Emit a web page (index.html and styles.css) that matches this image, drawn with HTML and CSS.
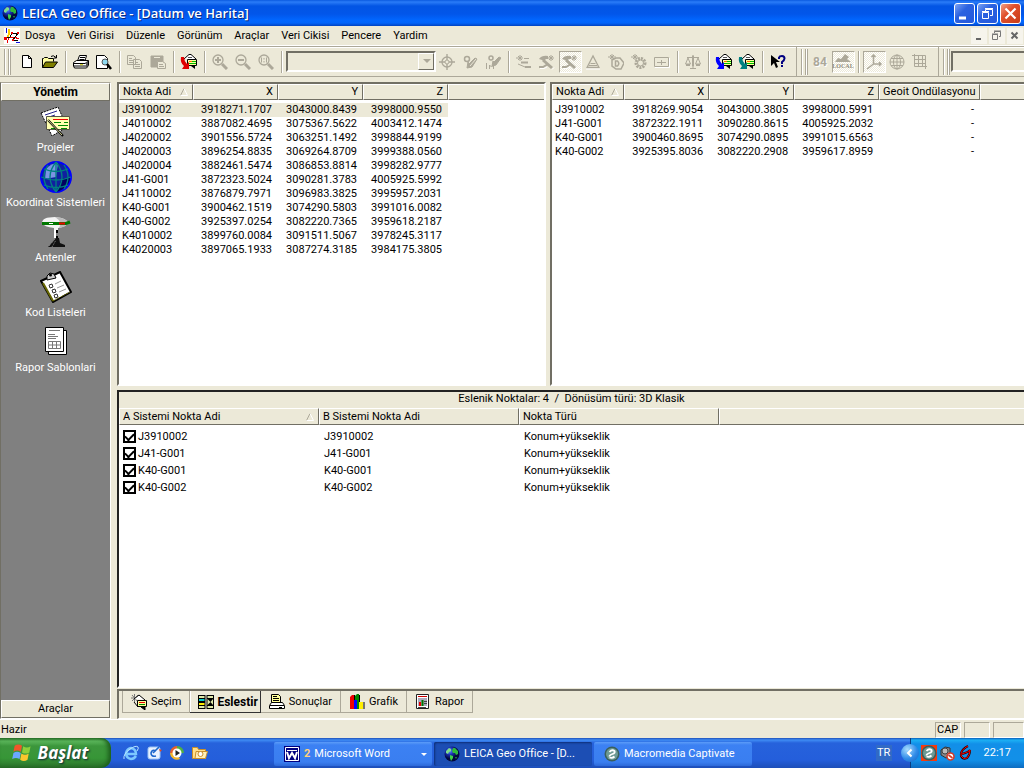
FILE: index.html
```html
<!DOCTYPE html>
<html lang="tr">
<head>
<meta charset="utf-8">
<title>LEICA Geo Office - [Datum ve Harita]</title>
<link rel="stylesheet" href="styles.css">
</head>
<body>
<svg class="defs" aria-hidden="true">
  <defs>
    <radialGradient id="sea" cx="35%" cy="30%"><stop offset="0" stop-color="#5f8cff"/><stop offset="0.5" stop-color="#1a2fb0"/><stop offset="1" stop-color="#02083f"/></radialGradient>
  </defs>
  <symbol id="earth" viewBox="0 0 16 16"><circle cx="8" cy="8" r="7.500" fill="url(#sea)"/><path d="M2 5l3-3 2 1 0 2-2 1-1 2-2-1z" fill="#7fe08a"/><path d="M9 2l2 0 3 3 0 3-2 1-1-2-2 0-1-2z" fill="#2fb83a"/><path d="M6 9l3 1 0 2-2 3-1-3z" fill="#3fd04a"/><path d="M11 11l2 0-1 2z" fill="#2a9a3a"/></symbol>
  <symbol id="sort" viewBox="0 0 8 8"><path d="M0.500 7.500L4 0.500" stroke="#aca899" fill="none"/><path d="M4 0.500L7.500 7.500H0.500" stroke="#fff" fill="none"/></symbol>
  <symbol id="macro" viewBox="0 0 16 16"><circle cx="8" cy="8" r="7.500" fill="#3a5f5c"/><circle cx="8" cy="8" r="6" fill="#6d9a94"/><path d="M5.500 6Q8 3 10.500 5q1 2-2 3t-3 2.500M5.500 11.500q3 1 5-1" stroke="#fff" stroke-width="1.800" fill="none"/></symbol>
  <symbol id="transfer" viewBox="0 0 18 16"><path d="M4 5l5-4.500h2L16 5" fill="#fff" stroke="#000"/><path d="M8 3.500h4" stroke="#555"/><path d="M7.500 5.500h9v6h-9z" fill="#ff9" stroke="#000"/><path d="M9 7.500h3" stroke="#f60"/><path d="M12 7.500h4M9 9.500h7" stroke="#0b0"/><path d="M11 12l4 3v-3z"/><path d="M1 3l3 0q0 4 3 7l2-2v7H2l2-3Q0 9 1 3z" fill="currentColor"/></symbol>
  <symbol id="hammer" viewBox="0 0 16 16"><path d="M0 5q3-4 9-3l0 3-2 0-2 2-2-1z" fill="#aca899"/><path d="M5 5l9 8-2 2-9-8z" fill="#aca899"/><path d="M0 13h4l5-3" fill="none" stroke="#aca899" stroke-width="2"/><path d="M9 4h6M12 1v6M10 2l4 4M14 2l-4 4" stroke="#aca899"/><path d="M1 14.500h4l3-1.500M13 15.500l2-2" fill="none" stroke="#fff"/></symbol>
</svg>

<header class="titlebar">
  <svg class="i16"><use href="#earth"/></svg>
  <h1 class="title">LEICA Geo Office - [Datum ve Harita]</h1>
  <button class="winbtn" aria-label="Simge durumu"><svg class="i19" viewBox="0 0 19 19"><path d="M4 14h7" stroke="#fff" stroke-width="3"/></svg></button>
  <button class="winbtn" aria-label="Geri yükle"><svg class="i19" viewBox="0 0 19 19" fill="none" stroke="#fff"><path d="M7.500 7V5.500h7v6H12M7 4.500h8"/><path d="M4.500 8.500h6v6h-6zM4 7.500h7"/></svg></button>
  <button class="winbtn close" aria-label="Kapat"><svg class="i19" viewBox="0 0 19 19"><path d="M4.500 4.500l10 10M14.500 4.500l-10 10" stroke="#fff" stroke-width="2.200"/></svg></button>
</header>

<nav class="menubar">
  <svg class="i16 docicon" viewBox="0 0 16 16" shape-rendering="crispEdges"><path d="M0 0h16v16H0z" fill="#fff"/><path d="M5 1q1 4-1 8" stroke="#fc0" fill="none" stroke-width="2"/><path d="M3 15l2-6 5 0 5 2" stroke="#e00" fill="none"/><path d="M2 0v5M12 14h4" stroke="#11d" fill="none"/><path d="M1 10l5-1 2-4 6 0-5 7 5 0" stroke="#000" fill="none"/><path d="M0 9h3v3H0zM7 4h2v2H7zM13 4h2v2h-2zM8 11h2v2H8z" fill="#e00"/></svg>
  <button class="menu">Dosya</button><button class="menu">Veri Girisi</button><button class="menu">Düzenle</button><button class="menu">Görünüm</button><button class="menu">Araçlar</button><button class="menu">Veri Cikisi</button><button class="menu">Pencere</button><button class="menu">Yardim</button>
  <span class="grow"></span>
  <button class="mdi" aria-label="Simge durumu"><svg class="i16" viewBox="0 0 16 16"><path d="M5 11h5" stroke="#666" stroke-width="2"/></svg></button>
  <button class="mdi" aria-label="Geri yükle"><svg class="i16" viewBox="0 0 16 16" fill="none" stroke="#777"><path d="M5.500 5V3.500h6v5H10M5 3h7M3.500 6.500h5v5h-5zM3 6h6"/></svg></button>
  <button class="mdi" aria-label="Kapat"><svg class="i16" viewBox="0 0 16 16"><path d="M4.500 4.500l6 6M10.500 4.500l-6 6" stroke="#666" stroke-width="2"/></svg></button>
</nav>

<div class="toolbars">
  <div class="toolbar first">
    <span class="grip"></span>
    <button class="tool" aria-label="Yeni"><svg class="i16" viewBox="0 0 16 16"><path d="M3.500 1.500h6l3 3v9h-9zM9.500 1.500v3h3" fill="#fff" stroke="#000"/></svg></button>
    <button class="tool" aria-label="Aç"><svg class="i16" viewBox="0 0 16 16"><path d="M0.500 13.500V4.500h1l1-1h3l1 1h5v3" fill="#ffffa0" stroke="#000"/><path d="M0.500 13.500l3-5.500h12l-4 5.500z" fill="#808000" stroke="#000"/><path d="M9 2.500q2-2 5 1M14.500 1v3H12" fill="none" stroke="#000"/></svg></button>
    <span class="sep"></span>
    <button class="tool" aria-label="Yazdir"><svg class="i16" viewBox="0 0 16 16"><path d="M4.500 7l2-5.500h7L12 7" fill="#fff" stroke="#000"/><path d="M7 3.500h5M6.500 5.500h5" stroke="#000"/><path d="M0.500 8.500l3-2h12v5l-2 2.500h-12l-1-2z" fill="#fff" stroke="#000"/><path d="M1 9.500h11l3-2M1 12h12" stroke="#000" fill="none"/><path d="M7 10.700h3" stroke="#cc0"/><path d="M13 8v6l2-2.500V7" fill="#555"/></svg></button>
    <button class="tool" aria-label="Önizleme"><svg class="i16" viewBox="0 0 16 16"><path d="M0.500 14.500v-13h8l3 3v10z" fill="#fff" stroke="#000"/><circle cx="9" cy="8" r="3" fill="#8ed8f0" stroke="#555"/><path d="M11 10l4 5" stroke="#000" stroke-width="2.500"/></svg></button>
    <span class="sep"></span>
    <button class="tool" aria-label="Kopyala"><svg class="i16 dim" viewBox="0 0 16 16"><path d="M0.500 1.500h6l2 2v7h-8zM6.500 5.500h6l2 2v7h-8z" fill="#ece9d8"/><path d="M2 4.500h3M2 6.500h4M2 8.500h4M8 8.500h3M8 10.500h5M8 12.500h5"/></svg></button>
    <button class="tool" aria-label="Yapistir"><svg class="i16 dim" viewBox="0 0 16 16"><path d="M1 2h12v11H1z" fill="#aca899"/><path d="M4 3.500h6" stroke="#ece9d8"/><path d="M7.500 7.500h5l3 2v5h-8z" fill="#ece9d8"/><path d="M9 10.500h4M9 12.500h5"/></svg></button>
    <span class="sep"></span>
    <button class="tool red" aria-label="Aktar"><svg class="i18"><use href="#transfer"/></svg></button>
    <span class="sep"></span>
    <button class="tool" aria-label="Yakinlas"><svg class="i16 dim" viewBox="0 0 16 16"><circle cx="6" cy="6" r="5" stroke-width="1.300"/><path d="M3 6h6M6 3v6" stroke-width="2"/><path d="M10 10l5 5" stroke-width="3"/></svg></button>
    <button class="tool" aria-label="Uzaklas"><svg class="i16 dim" viewBox="0 0 16 16"><circle cx="6" cy="6" r="5" stroke-width="1.300"/><path d="M3 6h6" stroke-width="2"/><path d="M10 10l5 5" stroke-width="3"/></svg></button>
    <button class="tool" aria-label="Bire bir"><svg class="i16 dim" viewBox="0 0 16 16"><circle cx="6" cy="6" r="5" stroke-width="1.300"/><path d="M3.500 3.500v5M8.500 3.500v5M6 4v1.500M6 7v1.500"/><path d="M10 10l5 5" stroke-width="3"/></svg></button>
    <span class="sep"></span>
    <span class="combo"><select disabled aria-label="Nokta"></select><span class="drop"><svg viewBox="0 0 9 5" class="tri"><path d="M1 0h8L5 4z" fill="#aca899"/></svg></span></span>
    <button class="tool" aria-label="Hedef"><svg class="i16 dim" viewBox="0 0 16 16"><circle cx="8" cy="8" r="5" stroke-width="1.300"/><circle cx="8" cy="8" r="2"/><path d="M8 0v6M8 10v6M0 8h6M10 8h6" stroke-width="1.400"/></svg></button>
    <button class="tool" aria-label="Kalem"><svg class="i16 dim" viewBox="0 0 16 16"><circle cx="5" cy="5" r="2.500" stroke-width="1.500"/><path d="M6 8l1 2 6-6 2 1-5 8-5 1z" fill="#aca899"/><path d="M8 12l6-7" stroke="#ece9d8"/></svg></button>
    <button class="tool" aria-label="Ölçü"><svg class="i16 dim" viewBox="0 0 16 16"><circle cx="6" cy="4" r="2" stroke-width="1.500"/><path d="M8 7l1 1 5-5 2 1-5 7-4 1z" fill="#aca899"/><path d="M1.500 9v6M4.500 15v-4l2 2 2-2v4"/></svg></button>
    <span class="sep"></span>
    <button class="tool" aria-label="Baglanti"><svg class="i16 dim" viewBox="0 0 16 16"><path d="M0 4h7M4 1v6M2 2l4 4M6 2L2 6M8 4.500h5"/><path d="M5 8.500h7M9 13h6" stroke-width="2"/><path d="M2 10l7 3"/></svg></button>
    <button class="tool" aria-label="Hesapla"><svg class="i16"><use href="#hammer"/></svg></button>
    <button class="tool pressed" aria-label="Dengele"><svg class="i16"><use href="#hammer"/></svg></button>
    <button class="tool" aria-label="Üçgen"><svg class="i16 dim" viewBox="0 0 16 16"><path d="M2 13.500L8 2l6 11.500z" stroke-width="1.300"/><path d="M4 11.500h8M5.500 9.500h5"/><path d="M1 15h14" stroke="#fff"/></svg></button>
    <button class="tool" aria-label="Datum"><svg class="i16 dim" viewBox="0 0 16 16"><path d="M0 3h8M4 0v6M2 1l4 4M6 1L2 5"/><path d="M4 6v6l4 3h5l3-6-4-5H8z" stroke-width="1.500"/><path d="M7.500 7v5h2q2.500-2.500 0-5z" stroke-width="1.500"/></svg></button>
    <button class="tool" aria-label="Ayarlar"><svg class="i16 dim" viewBox="0 0 16 16"><path d="M0 3h7M4 0v6M2 1l4 4M6 1L2 5"/><circle cx="9.500" cy="9" r="4.500" stroke-width="3" stroke-dasharray="2 1"/><circle cx="9.500" cy="9" r="3"/></svg></button>
    <button class="tool" aria-label="Kutu"><svg class="i16 dim" viewBox="0 0 16 16"><path d="M0.500 3.500h14v9H0.500zM3 8.500h9M7.500 6v5"/><path d="M1 13.500h14.500V4" stroke="#fff"/></svg></button>
    <span class="sep"></span>
    <button class="tool" aria-label="Terazi"><svg class="i16 dim" viewBox="0 0 16 16"><path d="M8 1v13M5 14.500h6M2 3.500h12M3 4l-2.500 6h5zM13 4l-2.500 6h5z"/><path d="M1 11h4M11 11h4" stroke-width="2"/><path d="M7.500 2h1v10h-1z" fill="#aca899"/></svg></button>
    <span class="sep"></span>
    <button class="tool blue" aria-label="Al"><svg class="i18"><use href="#transfer"/></svg></button>
    <button class="tool teal" aria-label="Gönder"><svg class="i18"><use href="#transfer"/></svg></button>
    <span class="sep"></span>
    <button class="tool" aria-label="Bu nedir"><svg class="i16" viewBox="0 0 16 16"><path d="M1 1v11l3-3 2 5 2-1-2-5h4z"/><path d="M9 5V3.500Q9.500 2 12 2t2.500 2.500Q14.500 6 12 8v2" fill="none" stroke="#000080" stroke-width="2"/><path d="M11 11h2v2h-2z" fill="#000080"/></svg></button>
  </div>
  <div class="toolbar second">
    <span class="grip"></span>
    <button class="tool num" aria-label="WGS 84">84</button>
    <button class="tool pressed local" aria-label="Yerel"><svg class="i18" viewBox="0 0 18 10"><path d="M1 9l3-4 3 1 4-5 4 3-2 2 4 3z" fill="#aca899"/></svg><span>LOCAL</span></button>
    <span class="sep"></span>
    <button class="tool pressed" aria-label="Eksenler"><svg class="i16 dim" viewBox="0 0 16 16"><path d="M7.500 1v9h8M7.500 10L1 15M5.500 3l2-2 2 2M13 8l2 2-2 2" stroke-width="1.500"/></svg></button>
    <button class="tool" aria-label="Jeodezik"><svg class="i16 dim" viewBox="0 0 16 16"><circle cx="8" cy="8" r="7"/><ellipse cx="8" cy="8" rx="3.500" ry="7"/><path d="M1 8h14M2 4.500h12M2 11.500h12M8 1v14"/></svg></button>
    <button class="tool" aria-label="Izgara"><svg class="i16 dim" viewBox="0 0 16 16"><path d="M2.500 0v12.500H15M0 1.500h13.500V15M6.500 2v10M10.500 2v10M3 5.500h10M3 9.500h10"/></svg></button>
  </div>
  <div class="toolbar third">
    <span class="grip"></span>
    <span class="combo wide"><select disabled aria-label="Sistem"></select></span>
  </div>
</div>

<main class="work">
  <aside class="sidebar">
    <button class="bar strong">Yönetim</button>
    <div class="shortcuts">
      <button class="shortcut"><svg class="i32" viewBox="0 0 32 32"><path d="M1 7L18 1l9 20-15 9z" fill="#fff" stroke="#000" stroke-dasharray="2 1"/><path d="M5 9l12-4M6 12l9-3" stroke="#228"/><path d="M6.500 10.500h23v13h-23z" fill="#ffffb0" stroke="#554"/><path d="M13 13.500h15" stroke="#e00"/><path d="M14 16.500h7M24 16.500h4M18 19.500h10M11 22.500h6M21 22.500h6" stroke="#080"/><path d="M8 14l15 16" stroke="#000" stroke-width="2"/><path d="M8 14l14 15" stroke="#cc8"/></svg>Projeler</button>
      <button class="shortcut"><svg class="i32" viewBox="0 0 32 32"><circle cx="16" cy="16" r="15" fill="#1020a0" stroke="#0000ff" stroke-width="2"/><path d="M6 8q5-6 12-6l-2 14-11 2z" fill="#a8c8ff" opacity=".7"/><path d="M16 31q14-4 14-15l-8 2z" fill="#000060"/><path d="M1 16q15 6 30 0M4 8q12 5 24 0M4 24q12 5 24 0M16 1v30M16 1q-12 15 0 30M16 1q12 15 0 30M8 4q-8 12 0 24M24 4q8 12 0 24" fill="none" stroke="#008080" stroke-width="1.300"/></svg>Koordinat Sistemleri</button>
      <button class="shortcut"><svg class="i32" viewBox="0 0 32 32"><path d="M2 7q0-6 13-6 12 1 13 6-2 4-10 5l0 2h-4v-2Q4 11 2 7z" fill="#f4f4f4"/><path d="M15 1q12 1 13 6-2 4-9 5 4-6-4-11z" fill="#bbb"/><path d="M2 7.500h24l4-1.500" fill="none" stroke="#007800" stroke-width="3"/><path d="M9 7.500h4" stroke="#fff"/><path d="M19 7.500h6" stroke="#e00" stroke-width="2"/><path d="M15 14v8" stroke="#fff" stroke-width="2"/><path d="M17 14v3M17 20v3" stroke="#000" stroke-width="2"/><path d="M16 22h3l1 5 5 2v2H8z" fill="#111"/><path d="M9 30l6-7M12 31l4-7" stroke="#888" stroke-dasharray="1 1"/></svg>Antenler</button>
      <button class="shortcut"><svg class="i32" viewBox="0 0 32 32"><path d="M1 10L20 1l11 20-18 10z" fill="#fff" stroke="#000" stroke-width="2"/><path d="M3 12l10 18" stroke="#660" stroke-width="2"/><path d="M13 30l17-9" stroke="#660" stroke-dasharray="2 1"/><path d="M7 9l0-4 3-3 4 1 2 4z" fill="#ccc" stroke="#000"/><circle cx="10.500" cy="4" r="1.500"/><path d="M9 14l3-1 1 3-3 1zM12 19l3-1 1 3-3 1zM14 24l3-1 1 3-3 1z" fill="#fff" stroke="#333"/><path d="M15 13l6-3M17 17l7-3M19 21l7-3" stroke="#999"/></svg>Kod Listeleri</button>
      <button class="shortcut"><svg class="i32" viewBox="0 0 32 32"><path d="M8.500 4.500h18v24h-18z" fill="#fff" stroke="#000"/><path d="M5.500 1.500h18v24h-18z" fill="#fff" stroke="#000"/><path d="M9 4.500h11M8 8.500h7M8 10.500h10M8 12.500h8" stroke="#777"/><path d="M8.500 15.500h12v7h-12zM8.500 19h12M12.500 16v7M16.500 16v7" fill="none" stroke="#777"/></svg>Rapor Sablonlari</button>
    </div>
    <button class="bar">Araçlar</button>
  </aside>

  <div class="content">
    <div class="grids">
      <section class="pane left">
        <table class="grid">
          <colgroup><col class="c-name-a"><col class="c-num"><col class="c-num"><col class="c-num"><col></colgroup>
          <thead><tr><th class="name"><span class="sorted">Nokta Adi<svg class="sort"><use href="#sort"/></svg></span></th><th>X</th><th>Y</th><th>Z</th><th class="rest"></th></tr></thead>
          <tbody>
            <tr class="selected"><td>J3910002</td><td>3918271.1707</td><td>3043000.8439</td><td>3998000.9550</td></tr>
            <tr><td>J4010002</td><td>3887082.4695</td><td>3075367.5622</td><td>4003412.1474</td></tr>
            <tr><td>J4020002</td><td>3901556.5724</td><td>3063251.1492</td><td>3998844.9199</td></tr>
            <tr><td>J4020003</td><td>3896254.8835</td><td>3069264.8709</td><td>3999388.0560</td></tr>
            <tr><td>J4020004</td><td>3882461.5474</td><td>3086853.8814</td><td>3998282.9777</td></tr>
            <tr><td>J41-G001</td><td>3872323.5024</td><td>3090281.3783</td><td>4005925.5992</td></tr>
            <tr><td>J4110002</td><td>3876879.7971</td><td>3096983.3825</td><td>3995957.2031</td></tr>
            <tr><td>K40-G001</td><td>3900462.1519</td><td>3074290.5803</td><td>3991016.0082</td></tr>
            <tr><td>K40-G002</td><td>3925397.0254</td><td>3082220.7365</td><td>3959618.2187</td></tr>
            <tr><td>K4010002</td><td>3899760.0084</td><td>3091511.5067</td><td>3978245.3117</td></tr>
            <tr><td>K4020003</td><td>3897065.1933</td><td>3087274.3185</td><td>3984175.3805</td></tr>
          </tbody>
        </table>
      </section>
      <section class="pane right">
        <table class="grid">
          <colgroup><col class="c-name-b"><col class="c-num"><col class="c-num"><col class="c-num"><col class="c-geo"><col></colgroup>
          <thead><tr><th class="name"><span class="sorted">Nokta Adi<svg class="sort"><use href="#sort"/></svg></span></th><th>X</th><th>Y</th><th>Z</th><th>Geoit Ondülasyonu</th><th class="rest"></th></tr></thead>
          <tbody>
            <tr><td>J3910002</td><td>3918269.9054</td><td>3043000.3805</td><td>3998000.5991</td><td>-</td></tr>
            <tr><td>J41-G001</td><td>3872322.1911</td><td>3090280.8615</td><td>4005925.2032</td><td>-</td></tr>
            <tr><td>K40-G001</td><td>3900460.8695</td><td>3074290.0895</td><td>3991015.6563</td><td>-</td></tr>
            <tr><td>K40-G002</td><td>3925395.8036</td><td>3082220.2908</td><td>3959617.8959</td><td>-</td></tr>
          </tbody>
        </table>
      </section>
    </div>

    <section class="pane match">
      <h2 class="caption">Eslenik Noktalar: 4&nbsp; /&nbsp; Dönüsüm türü: 3D Klasik</h2>
      <table class="grid pairs">
        <colgroup><col class="c-pair"><col class="c-pair"><col class="c-pair"><col></colgroup>
        <thead><tr><th><span class="sorted">A Sistemi Nokta Adi<svg class="sort"><use href="#sort"/></svg></span></th><th>B Sistemi Nokta Adi</th><th>Nokta Türü</th><th class="rest"></th></tr></thead>
        <tbody>
          <tr><td><label class="tick"><input type="checkbox" checked>J3910002</label></td><td>J3910002</td><td>Konum+yükseklik</td></tr>
          <tr><td><label class="tick"><input type="checkbox" checked>J41-G001</label></td><td>J41-G001</td><td>Konum+yükseklik</td></tr>
          <tr><td><label class="tick"><input type="checkbox" checked>K40-G001</label></td><td>K40-G001</td><td>Konum+yükseklik</td></tr>
          <tr><td><label class="tick"><input type="checkbox" checked>K40-G002</label></td><td>K40-G002</td><td>Konum+yükseklik</td></tr>
        </tbody>
      </table>
    </section>

    <div class="tabs">
      <button class="tab"><svg class="i16" viewBox="0 0 16 16"><path d="M0 4h7M3.500 0v8M1 1l6 7M7 1L1 7" stroke="#777"/><path d="M3 5l5-4 6 5" fill="#fff" stroke="#000"/><path d="M6.500 6.500h9v6h-9z" fill="#ff9" stroke="#000"/><path d="M8 8.500h6" stroke="#e00"/><path d="M8 10.500h6" stroke="#080"/><path d="M10 13l4 3v-3zM3 8l4 5" stroke="#000"/></svg>Seçim</button>
      <button class="tab active"><svg class="i16" viewBox="0 0 16 16"><path d="M0 1h7.500v14H0zM8.500 1H16v14H8.500z"/><path d="M1 3h5.500M9.500 3H15M1 13h5.500M9.500 13H15" stroke="#dfe8a8" stroke-width="2"/><path d="M1 6h5.500" stroke="#0cc" stroke-width="2"/><path d="M1 10h5.500" stroke="#fe0" stroke-width="2"/><path d="M9.500 5H15v6H9.500z" fill="#dfe8a8"/><path d="M9.500 5l3 3L15 5zM9.500 11l3-3 2.500 3z" fill="#000"/></svg>Eslestir</button>
      <button class="tab"><svg class="i16" viewBox="0 0 16 16"><path d="M2.500 9.500V0.500h7l2 2v7" fill="#ff9" stroke="#000"/><path d="M4 2.500h4M4 4.500h6M4 6.500h6" stroke="#000"/><path d="M0.500 11.500l2-3h11l2 3v3H0.500z" fill="#fff" stroke="#000"/><path d="M1 11.500h14M10 13.500h3" stroke="#000"/></svg>Sonuçlar</button>
      <button class="tab"><svg class="i16" viewBox="0 0 16 16"><path d="M1 3l2-2h2v14H1z" fill="#e00"/><path d="M6 2l2-2h2v15H6z" fill="#080"/><path d="M5.500 1v14M10.500 1v14M15 8v7" stroke="#000"/><path d="M5 6h3v9H5z" fill="#00f"/><path d="M10 8h4v7h-4z" fill="#fe0"/></svg>Grafik</button>
      <button class="tab"><svg class="i16" viewBox="0 0 16 16"><path d="M1.500 0.500h12v14h-12z" fill="#fff" stroke="#222"/><path d="M3 2.500h9" stroke="#c00"/><path d="M3 4h9v8H3z" fill="#aab"/><path d="M5 8v4" stroke="#e00" stroke-width="2"/><path d="M7.500 6v6" stroke="#070" stroke-width="2"/><path d="M9 7.500h3M9 9.500h3M3 13.500h8" stroke="#444"/></svg>Rapor</button>
    </div>
  </div>
</main>

<footer class="status"><span class="grow">Hazir</span><span class="cell">CAP</span><span class="cell"></span><span class="cell last"></span></footer>

<div class="taskbar">
  <button class="start"><svg class="flag" viewBox="0 0 18 18"><path d="M3 3q3-2 6 0l-1 5q-3-2-6 0z" fill="#f0562a"/><path d="M10 3.500q3 2 6 0l-1 5q-3 2-6 0z" fill="#8cd03a"/><path d="M2 9q3-2 6 0l-1 5q-3-2-6 0z" fill="#6aa8ff"/><path d="M8.500 9.500q3 2 6 0l-1 5q-3 2-6 0z" fill="#fbc62e"/></svg>Başlat</button>
  <div class="quick">
    <button aria-label="Internet Explorer"><svg class="i16" viewBox="0 0 16 16"><path d="M13 11q-2 3-5 3-5-1-5-6 1-4 5-5 5 1 5 6H4" fill="none" stroke="#7cc8ff" stroke-width="2.500"/><path d="M1 14q-1-5 6-10 6-4 8-2 1 1-1 4" fill="none" stroke="#b8e4ff"/></svg></button>
    <button aria-label="Masaüstü"><svg class="i16" viewBox="0 0 16 16"><rect x="2" y="2" width="12" height="12" rx="2" fill="#e8f2ff" stroke="#9cc4f4"/><path d="M10 6q-4-2-5 2 0 4 5 3M7 8l6-6" fill="none" stroke="#1b66cc" stroke-width="1.600"/><path d="M13 4l3 1-2 2z" fill="#e64a19"/></svg></button>
    <button aria-label="Media Player"><svg class="i16" viewBox="0 0 16 16"><circle cx="8" cy="8" r="7" fill="#2a66d8"/><path d="M8 1a7 7 0 0 0-7 7h7z" fill="#e8622a"/><path d="M8 1a7 7 0 0 1 7 7H8z" fill="#50b040"/><path d="M1 8a7 7 0 0 0 10 6L8 8z" fill="#f4b52a"/><circle cx="8" cy="8" r="4.500" fill="#fff"/><path d="M6.500 5l4.500 3-4.500 3z" fill="#222"/></svg></button>
    <button aria-label="Klasör"><svg class="i16" viewBox="0 0 16 16"><path d="M0.500 2.500h5l1 2h7v9h-13z" fill="#ffe08a" stroke="#c98f2a"/><path d="M3 13.500l1-7h11.500l-2 7z" fill="#fff0b8" stroke="#c98f2a"/><circle cx="8.500" cy="9" r="2.500" fill="#fff" stroke="#c98f2a"/></svg></button>
  </div>
  <button class="task"><svg class="i16" viewBox="0 0 16 16"><path d="M0 0h16v16H0z" fill="#000080"/><path d="M1.500 1.500h13v13h-13z" fill="none" stroke="#fff"/><path d="M3 4.500h10" stroke="#fff"/><path d="M3 6l2 6 3-5 3 5 2-6" fill="none" stroke="#fff" stroke-width="2"/></svg><b>2</b><span class="grow">Microsoft Word</span><svg class="tri" viewBox="0 0 9 5"><path d="M2 1h6L5 4z" fill="#fff"/></svg></button>
  <button class="task current"><svg class="i16"><use href="#earth"/></svg>LEICA Geo Office - [D...</button>
  <button class="task"><svg class="i16"><use href="#macro"/></svg>Macromedia Captivate</button>
  <span class="grow"></span>
  <button class="lang">TR</button>
  <div class="tray">
    <button class="chevron" aria-label="Gizli simgeler"><svg class="i16" viewBox="0 0 16 16"><path d="M9.500 4.500L6 8l3.500 3.500" fill="none" stroke="#fff" stroke-width="2"/></svg></button>
    <span class="captivate"><svg class="i16"><use href="#macro"/></svg></span>
    <svg class="i16" viewBox="0 0 16 16"><path d="M2 5l4-3 5 1v8l-4 2-5-3z" fill="#888" stroke="#333"/><circle cx="6" cy="6" r="3" fill="#bbb" stroke="#444"/><circle cx="11.500" cy="11.500" r="3.500" fill="#fff" stroke="#d43a2a" stroke-width="1.600"/><path d="M9.500 10l4 3" stroke="#d43a2a" stroke-width="1.600"/></svg>
    <svg class="i16" viewBox="0 0 16 16"><path d="M11 1Q3 5 4 11q2 4 6 2 3-3 3-8-1 2-8 4" fill="none" stroke="#200" stroke-width="2"/><path d="M11 1Q3 5 4 11q2 4 6 2 3-3 3-8-1 2-8 4" fill="none" stroke="#f00"/></svg>
    <time class="clock">22:17</time>
  </div>
</div>
</body>
</html>
```
FILE: styles.css
```css
* { box-sizing: border-box; }

:root {
  --face: #ece9d8;
  --shade: #aca899;
  --dark: #716f64;
  --ui: Roboto, "Noto Sans", "Liberation Sans", sans-serif;
}

body {
  margin: 0;
  height: 100vh;
  display: flex;
  flex-direction: column;
  overflow: hidden;
  background: var(--face);
  color: #000;
  font: 11px/14px var(--ui);
}

button {
  margin: 0;
  padding: 0;
  border: 0;
  background: none;
  color: inherit;
  font: inherit;
  display: flex;
  align-items: center;
  justify-content: center;
}

svg { flex: none; }
.defs { position: absolute; width: 0; height: 0; }
.i16 { width: 16px; height: 16px; }
.i18 { width: 18px; height: 16px; }
.i19 { width: 19px; height: 19px; }
.i32 { width: 32px; height: 32px; }
.tri { width: 9px; height: 5px; }
.dim { fill: none; stroke: var(--shade); }
.grow { flex: 1; }

.titlebar {
  flex: none;
  height: 26px;
  display: flex;
  align-items: center;
  gap: 2px;
  padding: 0 3px 0 2px;
  background: linear-gradient(#0a5ae0 0, #2a7cf8 2px, #0255e4 6px, #0256ea 14px, #0166ff 20px, #0264fa 23px, #0142c0 26px);
}
.title {
  flex: 1;
  margin: 0;
  padding-left: 2px;
  color: #fff;
  font: 600 13px/16px "Open Sans", "Noto Sans", sans-serif;
  text-shadow: 1px 1px #0a2a80;
}
.winbtn {
  width: 21px;
  height: 21px;
  border: 1px solid #fff;
  border-radius: 3px;
  background: linear-gradient(135deg, #7aa2f4, #2b62e0 40%, #2458dc);
}
.winbtn.close { background: linear-gradient(135deg, #f0a088, #e0502c 40%, #c83c18); }

.menubar {
  flex: none;
  height: 19px;
  display: flex;
  align-items: center;
  padding: 0 1px 0 4px;
}
.docicon { margin-right: -1px; }
.menu { padding: 0 6px; height: 18px; }
.mdi { width: 16px; height: 16px; margin-left: 2px; background: #f6f4ec; }

.toolbars {
  flex: none;
  height: 32px;
  display: flex;
  border-top: 1px solid #fff;
  border-bottom: 1px solid var(--shade);
}
.toolbar {
  display: flex;
  align-items: center;
  border-top: 1px solid var(--shade);
  box-shadow: inset 0 1px #fff;
  padding-left: 4px;
}
.toolbar.first { width: 797px; border-right: 1px solid var(--shade); }
.toolbar.second { width: 142px; border-right: 1px solid var(--shade); }
.toolbar.third { flex: 1; overflow: hidden; }
.grip {
  flex: none;
  width: 7px;
  height: 26px;
  margin-right: 1px;
  border: solid var(--shade);
  border-width: 0 1px;
  background: linear-gradient(90deg, #fff 1px, var(--face) 1px 3px, var(--shade) 3px 4px, #fff 4px);
}
.first .grip { margin-right: 5px; }
.tool { flex: none; width: 23px; height: 22px; padding-right: 1px; }
.sep {
  flex: none;
  width: 2px;
  height: 22px;
  margin: 0 3px;
  border-left: 1px solid var(--shade);
  border-right: 1px solid #fff;
}
.pressed {
  border: 1px solid;
  border-color: var(--shade) #fff #fff var(--shade);
  background: repeating-conic-gradient(#fff 0 25%, var(--face) 0 50%) 0 0 / 2px 2px;
}
.red { color: #e00000; }
.blue { color: #0000ff; }
.teal { color: #008080; }
.num { color: var(--shade); font: bold 12px/14px var(--ui); text-shadow: 1px 1px #fff; }
.local { flex-direction: column; color: #8f8b7c; font: bold 6px/7px "Liberation Serif", serif; }
.local svg { height: 10px; }
.combo { flex: none; position: relative; width: 150px; height: 21px; display: flex; }
.combo select {
  flex: 1;
  appearance: none;
  border: 2px solid;
  border-color: var(--dark) #fff #fff var(--dark);
  background: var(--face);
  opacity: 1;
}
.combo.wide { flex: 1; }
.combo.wide select { border-right: 0; }
.drop {
  position: absolute;
  top: 2px;
  right: 2px;
  width: 16px;
  height: 17px;
  display: flex;
  align-items: center;
  justify-content: center;
  border: 1px solid;
  border-color: #fff var(--dark) var(--dark) #fff;
}

.work {
  flex: 1;
  min-height: 0;
  display: flex;
  gap: 6px;
  padding-top: 5px;
}
.sidebar {
  flex: none;
  width: 111px;
  display: flex;
  flex-direction: column;
  border: 1px solid;
  border-color: var(--shade) #fff #fff var(--dark);
  background: #808080;
}
.bar {
  height: 18px;
  border: 1px solid;
  border-color: #fff var(--dark) var(--dark) #fff;
  background: var(--face);
}
.strong { font-weight: bold; font-size: 12px; }
.shortcuts { flex: 1; display: flex; flex-direction: column; padding-top: 5px; }
.shortcut {
  flex-direction: column;
  justify-content: flex-start;
  height: 55px;
  gap: 3px;
  color: #fff;
  white-space: nowrap;
}

.content { flex: 1; min-width: 0; display: flex; flex-direction: column; }
.grids { flex: none; height: 304px; display: flex; gap: 4px; }
.pane {
  min-width: 0;
  border: 2px solid;
  border-color: var(--dark) #fff #fff var(--dark);
  background: #fff;
  overflow: hidden;
}
.pane.left { flex: 427 1 0; }
.pane.right { flex: 474 1 0; border-right: 0; }
.pane.match { flex: 1; margin-top: 4px; border-right: 0; border-color: #222 #fff #fff #222; }

.grid { width: 100%; table-layout: fixed; border-collapse: separate; border-spacing: 0; }
.c-name-a { width: 74px; }
.c-name-b { width: 72px; }
.c-num { width: 85px; }
.c-geo { width: 101px; }
.c-pair { width: 200px; }
.grid th {
  height: 16px;
  padding: 0 4px 0 3px;
  border: 1px solid;
  border-color: #fff var(--dark) var(--dark) #fff;
  background: var(--face);
  font-weight: normal;
  text-align: right;
  white-space: nowrap;
}
.grid .rest { border-right: 0; }
.grid th.name, .pairs th { text-align: left; }
.sorted { display: flex; align-items: center; justify-content: space-between; }
.sort { width: 8px; height: 8px; }
.grid td { height: 14px; padding: 0 6px 0 3px; text-align: right; white-space: nowrap; }
.grid td:first-child { text-align: left; }
.grid tbody::before { content: ""; display: table-row; height: 3px; }
.selected td { background: var(--face); }
.caption {
  margin: 0;
  height: 16px;
  background: var(--face);
  font: 11px/14px var(--ui);
  text-align: center;
}
.pairs th { height: 17px; }
.grid.pairs td { height: 17px; padding-left: 5px; text-align: left; }
.grid.pairs td:first-child { padding-left: 4px; }
.tick { display: flex; align-items: center; gap: 2px; }
.tick input {
  appearance: none;
  width: 13px;
  height: 13px;
  margin: 0;
  border: 2px solid #000;
  background: #fff;
  display: grid;
  place-items: center;
}
.tick input:checked::before {
  content: "";
  width: 7px;
  height: 4px;
  margin-bottom: 2px;
  border: solid #000;
  border-width: 0 0 2px 2px;
  transform: rotate(-45deg);
}

.tabs {
  flex: none;
  height: 30px;
  margin-top: 1px;
  display: flex;
  align-items: flex-start;
  padding-left: 3px;
  border: solid;
  border-width: 2px 0 1px 2px;
  border-color: var(--dark) #fff #fff var(--dark);
}
.tab {
  height: 22px;
  gap: 4px;
  padding: 0 8px;
  border: solid var(--shade);
  border-width: 0 1px 1px 0;
}
.tab:first-child { border-left-width: 1px; }
.tab.active {
  padding: 0 2px 0 8px;
  gap: 3px;
  border-color: #333;
  box-shadow: inset 1px 0 #fff;
  font-weight: bold;
  font-size: 12px;
}

.status {
  flex: none;
  height: 19px;
  display: flex;
  align-items: center;
  gap: 3px;
  padding: 2px 0 0 1px;
  border-top: 1px solid #fff;
}
.cell {
  width: 26px;
  height: 16px;
  padding-left: 1px;
  border: 1px solid;
  border-color: var(--shade) #fff #fff var(--shade);
}
.cell.last { width: 31px; }

.taskbar {
  flex: none;
  height: 30px;
  display: flex;
  align-items: center;
  background: linear-gradient(#1f50b8 0, #3f8cf4 2px, #2662dc 5px, #245edb 22px, #1d4eb8 30px);
  color: #fff;
}
.start {
  width: 111px;
  height: 30px;
  gap: 5px;
  padding-right: 12px;
  border-radius: 0 10px 10px 0;
  background: linear-gradient(#2e7a2e 0, #5cb85c 3px, #3c963c 8px, #379637 20px, #2a702a 30px);
  box-shadow: inset -3px 0 4px #1d5e1d;
  font: italic bold 17px/20px "Open Sans", "Noto Sans", sans-serif;
  text-shadow: 1px 1px 2px #123;
}
.flag { width: 22px; height: 22px; }
.quick { display: flex; gap: 7px; width: 163px; padding-left: 12px; }
.task {
  width: 158px;
  height: 24px;
  margin: 2px 2px 0 0;
  padding: 0 4px 0 10px;
  gap: 4px;
  justify-content: flex-start;
  border-radius: 2px;
  background: linear-gradient(#5c9cf8 0, #3c81f3 3px, #3a7ef0 20px, #2c68d8 24px);
  text-align: left;
  white-space: nowrap;
}
.task b { color: #ffd27a; }
.task.current { background: #1c4eb4; box-shadow: inset 1px 1px 2px #0e2f78; }
.lang { width: 16px; height: 16px; margin-right: 18px; background: #316ac5; }
.tray {
  height: 30px;
  display: flex;
  align-items: center;
  gap: 2px;
  padding-right: 13px;
  background: linear-gradient(#0c5cb8 0, #1cb0f4 2px, #128fe8 6px, #1290e8 22px, #0d6cc0 30px);
  border-left: 1px solid #0a3c80;
}
.chevron {
  width: 18px;
  height: 18px;
  margin-left: -10px;
  border-radius: 50%;
  background: radial-gradient(circle at 35% 30%, #a8dcff, #2f8be8 55%, #1460c0);
}
.captivate { display: flex; background: #f43a0c; }
.clock { padding-left: 9px; }
```
